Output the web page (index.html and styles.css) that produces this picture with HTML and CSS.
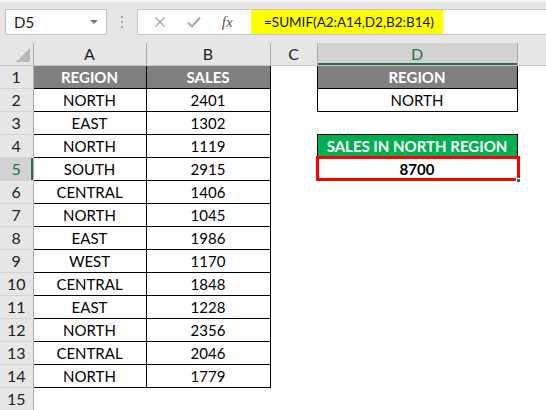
FILE: index.html
```html
<!DOCTYPE html>
<html lang="en">
<head>
    <meta charset="UTF-8">
    <title>SUMIF - Sales in North Region</title>
    <link rel="stylesheet" href="styles.css">
</head>
<body>
    <!-- Formula bar -->
    <div class="toolbar">
        <div class="name-box">
            <span>D5</span>
            <span class="name-arrow"></span>
        </div>
        <div class="grip">
            <span></span><span></span><span></span>
        </div>
        <div class="formula-box">
            <div class="formula-icons">
                <svg class="icon" width="12" height="12" viewBox="0 0 12 12">
                    <path d="M1.5 1.5 L10.5 10.5 M10.5 1.5 L1.5 10.5" stroke="#a8a8a8" stroke-width="1.4" fill="none"/>
                </svg>
                <svg class="icon" width="14" height="12" viewBox="0 0 14 12">
                    <path d="M1 6.5 L5 10.5 L13 1.5" stroke="#a8a8a8" stroke-width="2" fill="none"/>
                </svg>
                <span class="fx">fx</span>
            </div>
            <div class="formula">=SUMIF(A2:A14,D2,B2:B14)</div>
        </div>
    </div>

    <!-- Sheet -->
    <table class="sheet">
        <colgroup>
            <col class="c-head">
            <col class="c-a">
            <col class="c-b">
            <col class="c-c">
            <col class="c-d">
            <col>
        </colgroup>
        <tr class="col-heads">
            <th class="corner">
                <svg width="16" height="16" viewBox="0 0 16 16"><polygon points="15,1 15,15 1,15" fill="#b9b9b9"/></svg>
            </th>
            <th>A</th>
            <th>B</th>
            <th>C</th>
            <th class="active">D</th>
            <th></th>
        </tr>
        <tr>
            <th class="row-head">1</th>
            <td class="box title">REGION</td>
            <td class="box title">SALES</td>
            <td></td>
            <td class="box title">REGION</td>
            <td></td>
        </tr>
        <tr>
            <th class="row-head">2</th>
            <td class="box">NORTH</td>
            <td class="box">2401</td>
            <td></td>
            <td class="box">NORTH</td>
            <td></td>
        </tr>
        <tr>
            <th class="row-head">3</th>
            <td class="box">EAST</td>
            <td class="box">1302</td>
            <td></td>
            <td></td>
            <td></td>
        </tr>
        <tr>
            <th class="row-head">4</th>
            <td class="box">NORTH</td>
            <td class="box">1119</td>
            <td></td>
            <td class="box green">SALES IN NORTH REGION</td>
            <td></td>
        </tr>
        <tr>
            <th class="row-head active">5</th>
            <td class="box">SOUTH</td>
            <td class="box">2915</td>
            <td></td>
            <td class="box result">8700<span class="sel"></span><span class="handle"></span></td>
            <td></td>
        </tr>
        <tr>
            <th class="row-head">6</th>
            <td class="box">CENTRAL</td>
            <td class="box">1406</td>
            <td></td><td></td><td></td>
        </tr>
        <tr>
            <th class="row-head">7</th>
            <td class="box">NORTH</td>
            <td class="box">1045</td>
            <td></td><td></td><td></td>
        </tr>
        <tr>
            <th class="row-head">8</th>
            <td class="box">EAST</td>
            <td class="box">1986</td>
            <td></td><td></td><td></td>
        </tr>
        <tr>
            <th class="row-head">9</th>
            <td class="box">WEST</td>
            <td class="box">1170</td>
            <td></td><td></td><td></td>
        </tr>
        <tr>
            <th class="row-head">10</th>
            <td class="box">CENTRAL</td>
            <td class="box">1848</td>
            <td></td><td></td><td></td>
        </tr>
        <tr>
            <th class="row-head">11</th>
            <td class="box">EAST</td>
            <td class="box">1228</td>
            <td></td><td></td><td></td>
        </tr>
        <tr>
            <th class="row-head">12</th>
            <td class="box">NORTH</td>
            <td class="box">2356</td>
            <td></td><td></td><td></td>
        </tr>
        <tr>
            <th class="row-head">13</th>
            <td class="box">CENTRAL</td>
            <td class="box">2046</td>
            <td></td><td></td><td></td>
        </tr>
        <tr>
            <th class="row-head">14</th>
            <td class="box">NORTH</td>
            <td class="box">1779</td>
            <td></td><td></td><td></td>
        </tr>
        <tr>
            <th class="row-head">15</th>
            <td></td><td></td><td></td><td></td><td></td>
        </tr>
    </table>
</body>
</html>
```

FILE: styles.css
```css
* {
    margin: 0;
    padding: 0;
    box-sizing: border-box;
}

body {
    width: 546px;
    height: 410px;
    overflow: hidden;
    background: #fff;
    font-family: 'Lato', 'Liberation Sans', sans-serif;
    color: #000;
}

/* Formula bar */
.toolbar {
    height: 43px;
    display: flex;
    align-items: flex-start;
    padding: 7px 0 0 5px;
    background: #e6e6e6;
    border-top: 2px solid #f3f3f3;
}

.name-box {
    width: 102px;
    height: 26px;
    display: flex;
    align-items: center;
    justify-content: space-between;
    padding: 0 8px 0 8px;
    background: #fff;
    border: 1px solid #c6c6c6;
    font-size: 15px;
    color: #222;
}

.name-arrow {
    width: 0;
    height: 0;
    border-left: 4px solid transparent;
    border-right: 4px solid transparent;
    border-top: 4px solid #777;
}

.grip {
    width: 30px;
    height: 26px;
    display: flex;
    flex-direction: column;
    align-items: center;
    justify-content: center;
    gap: 3px;
}

.grip span {
    width: 2px;
    height: 2px;
    background: #a6a6a6;
}

.formula-box {
    flex: 1;
    height: 26px;
    display: flex;
    background: #fff;
    border: 1px solid #c6c6c6;
    border-right: none;
}

.formula-icons {
    width: 111px;
    display: flex;
    align-items: center;
    justify-content: space-around;
    padding: 0 6px 0 6px;
}

.fx {
    font-family: 'Liberation Serif', serif;
    font-style: italic;
    font-size: 15px;
    color: #555;
}

.formula {
    width: 192px;
    margin-left: 2px;
    padding-left: 13px;
    display: flex;
    align-items: center;
    background: #ffff00;
    font-size: 13.5px;
    color: #111;
}

/* Sheet */
.sheet {
    width: 546px;
    table-layout: fixed;
    border-collapse: collapse;
    font-size: 15px;
}

.c-head { width: 33px; }
.c-a { width: 113px; }
.c-b { width: 124px; }
.c-c { width: 47px; }
.c-d { width: 200px; }

.sheet tr {
    height: 23px;
}

.sheet .col-heads {
    height: 22px;
}

.col-heads th {
    background: #e6e6e6;
    border-right: 1px solid #ababab;
    border-bottom: 1px solid #c6c6c6;
    font-weight: normal;
    font-size: 16px;
    color: #222;
}

.col-heads th:last-child {
    border-right: none;
}

.col-heads .corner {
    text-align: right;
    vertical-align: bottom;
    line-height: 0;
    padding: 0 2px 2px 0;
}

.col-heads .active {
    background: #d2d2d2;
    color: #217346;
    box-shadow: inset 0 -2px #217346;
}

.row-head {
    background: #e6e6e6;
    border-right: 1px solid #ababab;
    border-bottom: 1px solid #d4d4d4;
    font-weight: normal;
    font-size: 16px;
    color: #222;
}

.row-head.active {
    background: #d2d2d2;
    color: #217346;
    box-shadow: inset -2px 0 #217346;
}

.sheet td {
    padding: 0;
    text-align: center;
    white-space: nowrap;
}

.sheet .box {
    border: 1px solid #000;
}

.sheet .title {
    background: #808080;
    color: #fff;
    font-weight: bold;
}

.sheet .green {
    background: #00b050;
    color: #fff;
    font-weight: bold;
}

.sheet .result {
    position: relative;
    font-weight: bold;
}

.sel {
    position: absolute;
    left: -2px;
    right: -3px;
    top: -2px;
    bottom: -1px;
    border: 3px solid #ff0000;
}

.handle {
    position: absolute;
    right: -4px;
    bottom: -3px;
    width: 5px;
    height: 5px;
    background: #217346;
    border: 1px solid #fff;
}
```
